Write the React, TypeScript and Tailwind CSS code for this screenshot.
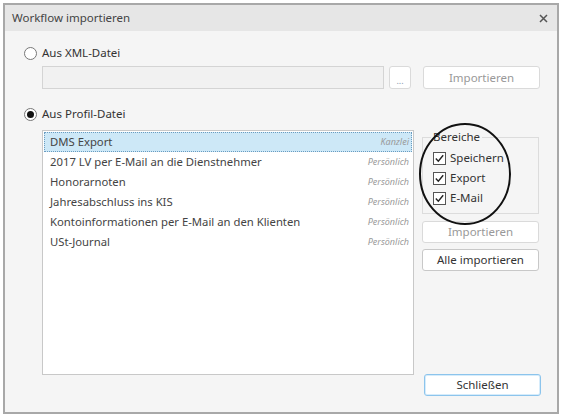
import React from 'react';

const items = [
  { name: 'DMS Export', tag: 'Kanzlei' },
  { name: '2017 LV per E-Mail an die Dienstnehmer', tag: 'Persönlich' },
  { name: 'Honorarnoten', tag: 'Persönlich' },
  { name: 'Jahresabschluss ins KIS', tag: 'Persönlich' },
  { name: 'Kontoinformationen per E-Mail an den Klienten', tag: 'Persönlich' },
  { name: 'USt-Journal', tag: 'Persönlich' },
];

const Check: React.FC<{ label: string }> = ({ label }) => (
  <div className="flex items-center gap-[4px] h-[20px]">
    <span className="w-[13px] h-[13px] border border-[#555] bg-white flex items-center justify-center">
      <svg width="11" height="11" viewBox="0 0 11 11">
        <path d="M1.8 5.6 L4.3 8.2 L9.2 2.2" fill="none" stroke="#222" strokeWidth="1.4" />
      </svg>
    </span>
    <span className="text-[11.5px] text-[#333]">{label}</span>
  </div>
);

const Radio: React.FC<{ label: string; checked?: boolean }> = ({ label, checked }) => (
  <div className="flex items-center gap-[5px] h-[16px]">
    <span className="w-[13px] h-[13px] rounded-full border border-[#777] bg-white flex items-center justify-center">
      {checked && <span className="w-[7px] h-[7px] rounded-full bg-[#111]" />}
    </span>
    <span className="text-[11.5px] text-[#333]">{label}</span>
  </div>
);

export default function App() {
  return (
    <div className="w-[565px] h-[416px] bg-white pt-[3px] pl-[3px]" style={{ fontFamily: '"Noto Sans", "Open Sans", sans-serif' }}>
      <div className="w-[556px] h-[411px] border-2 border-[#a8a8a8] bg-[#f5f5f5] flex flex-col">
        {/* title bar */}
        <div className="h-[26px] bg-[#e6e6e6] flex items-center justify-between pl-[7px] pr-[9px] shrink-0">
          <span className="text-[11.5px] text-[#444]">Workflow importieren</span>
          <svg width="9" height="9" viewBox="0 0 9 9">
            <path d="M1 1 L8 8 M8 1 L1 8" stroke="#555" strokeWidth="1.5" />
          </svg>
        </div>

        <div className="flex-1 pl-[19px] pr-[16px] pt-[14px] relative">
          <Radio label="Aus XML-Datei" />
          <div className="flex items-center mt-[5px] pl-[18px]">
            <div className="w-[342px] h-[23px] border border-[#d4d4d4] bg-[#f1f1f1]" />
            <div className="ml-[5px] w-[22px] h-[23px] border border-[#dadada] rounded-[3px] bg-white flex items-end justify-center pb-[3px] text-[9px] leading-none text-[#8a9ab0]">...</div>
            <div className="ml-[12px] w-[117px] h-[23px] border border-[#dadada] rounded-[3px] bg-white flex items-center justify-center text-[11.5px] text-[#999]">Importieren</div>
          </div>

          <div className="mt-[17px]">
            <Radio label="Aus Profil-Datei" checked />
          </div>

          <div className="flex mt-[8px] pl-[18px]">
            <div className="w-[372px] h-[245px] border border-[#c8c8c8] bg-white pt-[1px] px-[1px]">
              {items.map((it, i) => (
                <div
                  key={it.name}
                  className={
                    i === 0
                      ? 'h-[20px] flex items-center justify-between pl-[5px] pr-[2px] bg-[#cde8f7] border border-dotted border-[#6a9cc0]'
                      : 'h-[20px] flex items-center justify-between pl-[6px] pr-[3px]'
                  }
                >
                  <span className="text-[11.3px] text-[#444]">{it.name}</span>
                  <span className="text-[9px] italic text-[#9a9a9a]">{it.tag}</span>
                </div>
              ))}
            </div>

            <div className="ml-[8px] flex flex-col">
              <div className="relative w-[117px] h-[77px] mt-[7px] border border-[#dcdcdc] pl-[10px] pt-[10px]">
                <span className="absolute left-[8px] -top-[9px] bg-[#f5f5f5] px-[2px] text-[11.5px] leading-[16px] text-[#333]">Bereiche</span>
                <Check label="Speichern" />
                <Check label="Export" />
                <Check label="E-Mail" />
              </div>
              <div className="mt-[7px] w-[117px] h-[22px] border border-[#dadada] rounded-[3px] bg-white flex items-center justify-center text-[11.5px] text-[#999]">Importieren</div>
              <div className="mt-[6px] w-[117px] h-[22px] border border-[#c8c8c8] rounded-[3px] bg-white flex items-center justify-center text-[11.5px] text-[#333]">Alle importieren</div>
            </div>
          </div>

          <div className="flex justify-end -mt-[1px]">
            <div className="w-[117px] h-[22px] border border-[#8cc4ec] rounded-[3px] bg-white flex items-center justify-center text-[11.5px] text-[#333] shadow-[inset_0_0_0_1px_#d6ecfb]">Schließen</div>
          </div>

          {/* hand-drawn annotation circle */}
          <svg className="absolute left-[412px] top-[90px] pointer-events-none" width="96" height="106" viewBox="0 0 96 106">
            <ellipse cx="48" cy="53" rx="45" ry="50" fill="none" stroke="#111" strokeWidth="2" />
          </svg>
        </div>
      </div>
    </div>
  );
}
